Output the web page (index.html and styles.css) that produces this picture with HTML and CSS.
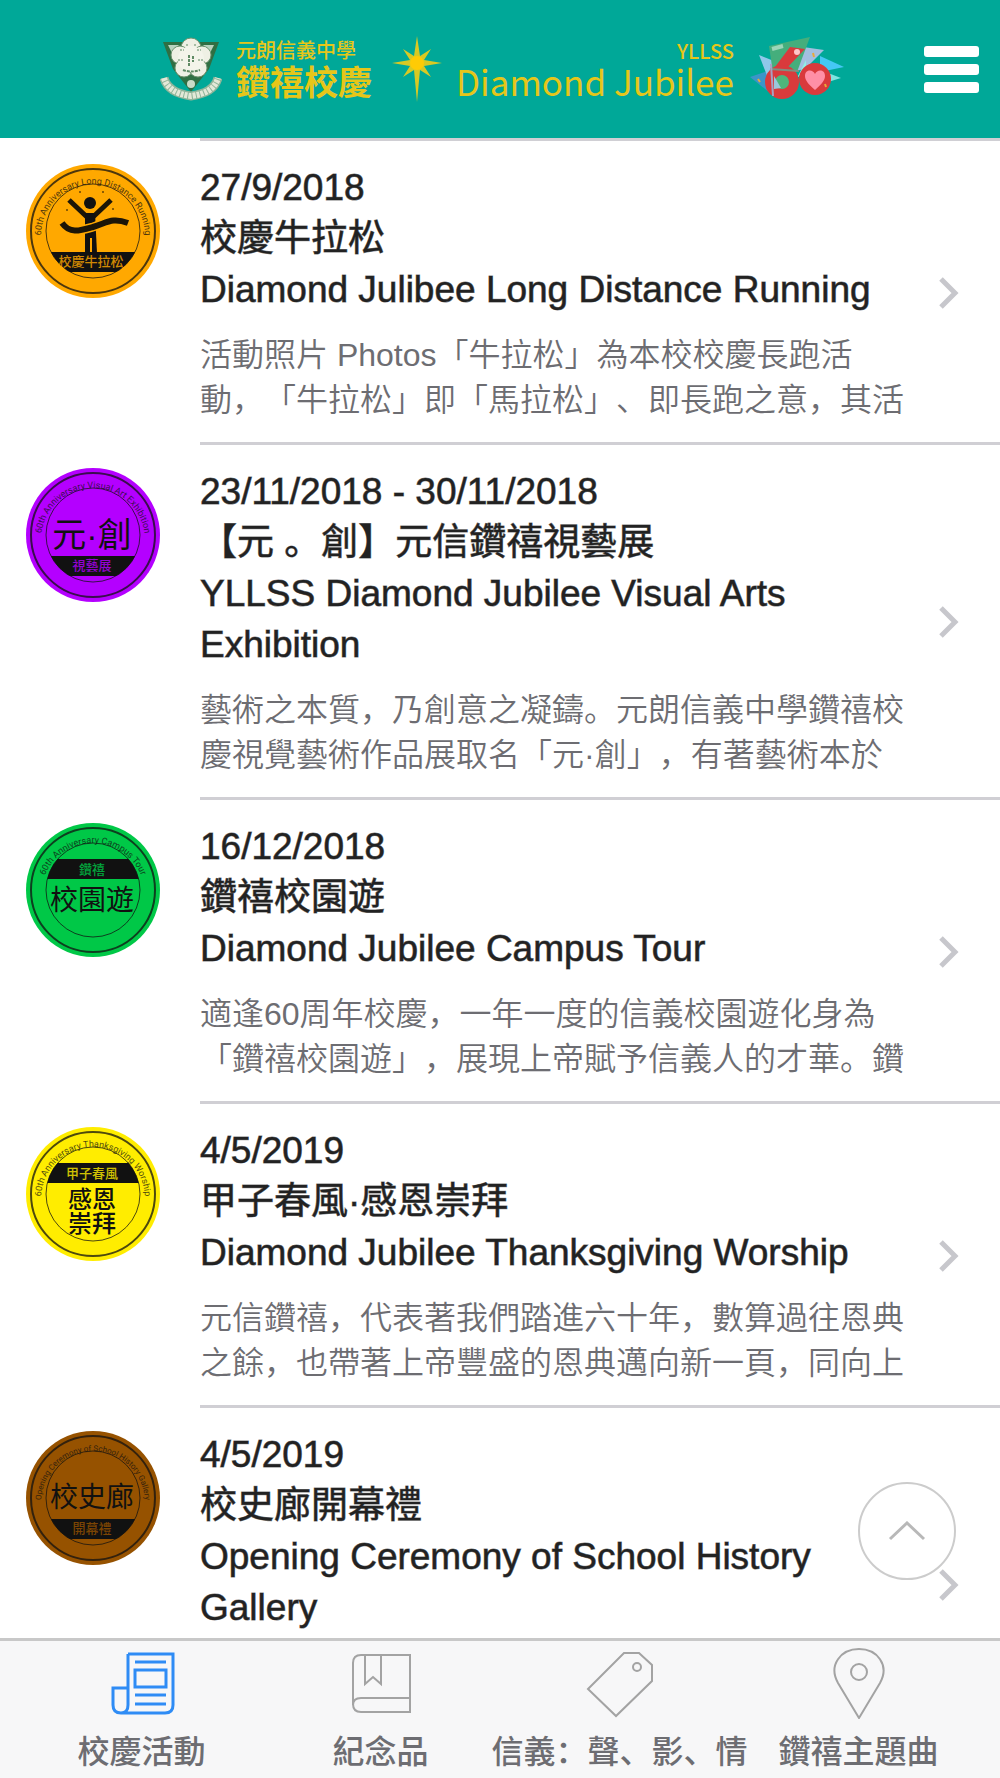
FILE: index.html
```html
<!DOCTYPE html>
<html lang="zh-CN">
<head>
    <meta charset="UTF-8">
    <meta name="viewport" content="width=device-width, initial-scale=1.0">
    <title>YLLSS Diamond Jubilee</title>
    <link rel="stylesheet" href="styles.css">
</head>
<body>
    <header class="navbar">
        <div class="brand">
            <svg class="crest" viewBox="0 0 62 66" aria-hidden="true">
                <path d="M3 6 H59 L49 33 L31 56 L13 33 Z" fill="#2f6f43"/>
                <path d="M8 9 H19 L12 17 Z M54 9 H43 L50 17 Z" fill="#b9d3bf"/>
                <g fill="#eef0e4" stroke="#6f9470">
                    <circle cx="31" cy="12" r="10"/>
                    <circle cx="20" cy="19" r="9"/>
                    <circle cx="42" cy="19" r="9"/>
                    <circle cx="24" cy="32" r="9"/>
                    <circle cx="38" cy="32" r="9"/>
                </g>
                <circle cx="31" cy="23" r="13" fill="#f3f4ea"/>
                <g fill="none" stroke="#5f8a64">
                    <path d="M29 19 V30 M33 20 V26 M23 34 Q31 37 40 34" stroke-width="2" stroke-dasharray="3 1"/>
                    <path d="M20 14 H24 M37 14 H41 M18 24 H23 M38 24 H43 M26 9 H29 M34 9 H36" stroke-dasharray="2 1"/>
                </g>
                <circle cx="31" cy="48" r="4" fill="#c9dcc8"/>
                <path d="M4 42 Q8 57 31 60 Q54 57 58 42" fill="none" stroke="#8fb59a" stroke-width="9"/>
                <path d="M4 42 Q8 57 31 60 Q54 57 58 42" fill="none" stroke="#e3e8d8" stroke-width="6" stroke-dasharray="3 1"/>
            </svg>
            <div class="brand-zh">
                <span class="brand-small">元朗信義中學</span>
                <span class="brand-large">鑽禧校慶</span>
            </div>
            <svg class="star" viewBox="0 0 50 66" aria-hidden="true">
                <path d="M25 0 L28 20 L39 13 L32 24 L50 27 L32 30 L39 41 L28 34 L25 66 L22 34 L11 41 L18 30 L0 27 L18 24 L11 13 L22 20 Z" fill="#d8c923"/>
                <circle cx="25" cy="27" r="7" fill="#ffcb05"/>
            </svg>
            <div class="brand-en">
                <span class="brand-small">YLLSS</span>
                <span class="brand-title">Diamond Jubilee</span>
            </div>
            <svg class="sixty" viewBox="0 0 94 66" aria-hidden="true">
                <path d="M0 41 L18 35 L20 57 Z" fill="#3b95c8"/>
                <path d="M9 19 L24 25 L18 42 Z" fill="#8fc8ea"/>
                <path d="M70 20 L94 31 L70 36 Z" fill="#45c8f5"/>
                <path d="M78 37 L91 42 L78 46 Z" fill="#7fe5e0"/>
                <path d="M53 11 L74 14 L56 32 L44 36 Z" fill="#a3bfe0"/>
                <path d="M56 24 L47 42 L56 34 Z" fill="#8ff0e6"/>
                <path d="M19 10 L60 1 L47 36 L23 37 Z" fill="#45ae7c"/>
                <path d="M22 13 L33 10" stroke="#9bd6b9" stroke-width="4"/>
                <path d="M40 11 L55 13 L34 35 L22 35 Z" fill="#d93a3c"/>
                <circle cx="32" cy="46" r="12" fill="#4fb57b" stroke="#d93a3c" stroke-width="10"/>
                <path d="M24 40 L31 52 L24 53 Z" fill="#9bc6dd"/>
                <path d="M20 33 L49 35" stroke="#7f8f80" stroke-width="2"/>
                <path d="M21 28 L23 60" stroke="#a7a0c4" stroke-width="2"/>
                <circle cx="65" cy="43" r="16" fill="#d93a3c"/>
                <path d="M65 54 C58 48 55 44 55 40 C55 33 63 33 65 38 C67 33 75 33 75 40 C75 44 72 48 65 54 Z" fill="#ff8fa6"/>
                <circle cx="47" cy="16" r="3" fill="#ffc6c8"/>
                <path d="M63 17 L64 21 M8 43 L10 46 M75 48 L76 51" stroke="#e8a93a" stroke-width="2"/>
            </svg>
        </div>
        <button class="menu-button" type="button" aria-label="選單">
            <span class="menu-bar"></span>
            <span class="menu-bar"></span>
            <span class="menu-bar"></span>
        </button>
    </header>

    <main class="page">
        <ul class="event-list">
            <li>
                <a class="event" href="#running">
                    <svg class="badge badge-orange" viewBox="0 0 134 134" aria-hidden="true">
                        <defs>
                            <path id="arc" d="M15 72 A52 52 0 1 1 119 72"/>
                            <clipPath id="inner"><circle cx="67" cy="67" r="47"/></clipPath>
                        </defs>
                        <circle class="badge-disc" cx="67" cy="67" r="67"/>
                        <circle class="badge-ring" cx="67" cy="67" r="62"/>
                        <circle class="badge-inner" cx="67" cy="67" r="47"/>
                        <text class="badge-arc"><textPath href="#arc" startOffset="50%">60th Anniversary Long Distance Running</textPath></text>
                        <circle cx="64" cy="39" r="6"/>
                        <path d="M43 36 L61 53 M85 36 L67 53" stroke="#1c1507" stroke-width="5"/>
                        <path d="M59 49 H69 L71 89 H59 Z"/>
                        <path class="badge-gap" d="M36 59 C44 70 53 67 67 63 S86 53 102 59"/>
                        <path d="M36 59 C44 70 53 67 67 63 S86 53 102 59" fill="none" stroke="#1c1507" stroke-width="6"/>
                        <path class="badge-slot" d="M65 74 V89"/>
                        <path d="M41 45 V47 M87 44 V46 M53 28 H55 M76 28 H78" stroke="#1c1507"/>
                        <rect x="15" y="88" width="104" height="20" clip-path="url(#inner)"/>
                        <text class="badge-band" x="65" y="102">校慶牛拉松</text>
                    </svg>
                    <div class="event-body">
                        <div class="event-text">
                            <h2 class="event-title">27/9/2018<br>校慶牛拉松<br>Diamond Julibee Long Distance Running</h2>
                            <p class="event-desc">活動照片 Photos「牛拉松」為本校校慶長跑活動，「牛拉松」即「馬拉松」、即長跑之意，其活</p>
                        </div>
                        <svg class="chevron" viewBox="0 0 22 34" aria-hidden="true"><path d="M3 3 L17 17 L3 31"/></svg>
                    </div>
                </a>
            </li>
            <li>
                <a class="event" href="#visual-arts">
                    <svg class="badge badge-purple" viewBox="0 0 134 134" aria-hidden="true">
                        <circle class="badge-disc" cx="67" cy="67" r="67"/>
                        <circle class="badge-ring" cx="67" cy="67" r="62"/>
                        <circle class="badge-inner" cx="67" cy="67" r="47"/>
                        <text class="badge-arc"><textPath href="#arc" startOffset="50%">60th Anniversary Visual Art Exhibition</textPath></text>
                        <text class="badge-big" x="66" y="79">元·創</text>
                        <rect x="15" y="88" width="104" height="20" clip-path="url(#inner)"/>
                        <text class="badge-band" x="66" y="102">視藝展</text>
                    </svg>
                    <div class="event-body">
                        <div class="event-text">
                            <h2 class="event-title">23/11/2018 - 30/11/2018<br>【元 。創】元信鑽禧視藝展<br>YLLSS Diamond Jubilee Visual Arts Exhibition</h2>
                            <p class="event-desc">藝術之本質，乃創意之凝鑄。元朗信義中學鑽禧校慶視覺藝術作品展取名「元·創」，有著藝術本於</p>
                        </div>
                        <svg class="chevron" viewBox="0 0 22 34" aria-hidden="true"><path d="M3 3 L17 17 L3 31"/></svg>
                    </div>
                </a>
            </li>
            <li>
                <a class="event" href="#campus-tour">
                    <svg class="badge badge-green" viewBox="0 0 134 134" aria-hidden="true">
                        <circle class="badge-disc" cx="67" cy="67" r="67"/>
                        <circle class="badge-ring" cx="67" cy="67" r="62"/>
                        <circle class="badge-inner" cx="67" cy="67" r="47"/>
                        <text class="badge-arc"><textPath href="#arc" startOffset="50%">60th Anniversary Campus Tour</textPath></text>
                        <rect x="15" y="36" width="104" height="20" clip-path="url(#inner)"/>
                        <text class="badge-band" x="66" y="51">鑽禧</text>
                        <text class="badge-main" x="66" y="87">校園遊</text>
                    </svg>
                    <div class="event-body">
                        <div class="event-text">
                            <h2 class="event-title">16/12/2018<br>鑽禧校園遊<br>Diamond Jubilee Campus Tour</h2>
                            <p class="event-desc">適逢60周年校慶，一年一度的信義校園遊化身為「鑽禧校園遊」，展現上帝賦予信義人的才華。鑽</p>
                        </div>
                        <svg class="chevron" viewBox="0 0 22 34" aria-hidden="true"><path d="M3 3 L17 17 L3 31"/></svg>
                    </div>
                </a>
            </li>
            <li>
                <a class="event" href="#thanksgiving">
                    <svg class="badge badge-yellow" viewBox="0 0 134 134" aria-hidden="true">
                        <circle class="badge-disc" cx="67" cy="67" r="67"/>
                        <circle class="badge-ring" cx="67" cy="67" r="62"/>
                        <circle class="badge-inner" cx="67" cy="67" r="47"/>
                        <text class="badge-arc"><textPath href="#arc" startOffset="50%">60th Anniversary Thanksgiving Worship</textPath></text>
                        <rect x="15" y="36" width="104" height="20" clip-path="url(#inner)"/>
                        <text class="badge-band" x="66" y="51">甲子春風</text>
                        <text class="badge-mid" x="66" y="81">感恩</text>
                        <text class="badge-mid" x="66" y="105">崇拜</text>
                    </svg>
                    <div class="event-body">
                        <div class="event-text">
                            <h2 class="event-title">4/5/2019<br>甲子春風·感恩崇拜<br>Diamond Jubilee Thanksgiving Worship</h2>
                            <p class="event-desc">元信鑽禧，代表著我們踏進六十年，數算過往恩典之餘，也帶著上帝豐盛的恩典邁向新一頁，同向上</p>
                        </div>
                        <svg class="chevron" viewBox="0 0 22 34" aria-hidden="true"><path d="M3 3 L17 17 L3 31"/></svg>
                    </div>
                </a>
            </li>
            <li>
                <a class="event" href="#history-gallery">
                    <svg class="badge badge-brown" viewBox="0 0 134 134" aria-hidden="true">
                        <circle class="badge-disc" cx="67" cy="67" r="67"/>
                        <circle class="badge-ring" cx="67" cy="67" r="62"/>
                        <circle class="badge-inner" cx="67" cy="67" r="47"/>
                        <text class="badge-arc badge-arc-long"><textPath href="#arc" startOffset="50%">Opening Ceremony of School History Gallery</textPath></text>
                        <text class="badge-main" x="66" y="76">校史廊</text>
                        <rect x="15" y="88" width="104" height="20" clip-path="url(#inner)"/>
                        <text class="badge-band" x="66" y="102">開幕禮</text>
                    </svg>
                    <div class="event-body">
                        <div class="event-text">
                            <h2 class="event-title">4/5/2019<br>校史廊開幕禮<br>Opening Ceremony of School History Gallery</h2>
                            <p class="event-desc"></p>
                        </div>
                        <svg class="chevron" viewBox="0 0 22 34" aria-hidden="true"><path d="M3 3 L17 17 L3 31"/></svg>
                    </div>
                </a>
            </li>
        </ul>
    </main>

    <button class="to-top" type="button" aria-label="返回頂部">
        <svg viewBox="0 0 38 20" aria-hidden="true"><path d="M2 18 L19 2 L36 18"/></svg>
    </button>

    <nav class="tabbar">
        <a class="tab tab-active" href="#events">
            <svg class="tab-icon" viewBox="0 0 72 72" aria-hidden="true">
                <path d="M22 7 H67 V58 Q67 66 59 66 H15 Q7 66 7 58 V41 H22 M22 7 V58 Q22 66 15 66 M29 15 H60 M29 23 H60 V40 H29 Z M29 48 H60 M29 57 H60"/>
            </svg>
            <span>校慶活動</span>
        </a>
        <a class="tab" href="#souvenirs">
            <svg class="tab-icon" viewBox="0 0 72 72" aria-hidden="true">
                <path d="M65 8 V65 H16 Q8 65 8 57 V16 Q8 8 16 8 Z M65 51 H16 Q8 51 8 58 M20 8 V37 L28 30 L36 37 V8"/>
            </svg>
            <span>紀念品</span>
        </a>
        <a class="tab" href="#media">
            <svg class="tab-icon" viewBox="0 0 72 72" aria-hidden="true">
                <path d="M4 42 L40 6 H55 L68 18 V34 L32 69 Z"/>
                <circle cx="53" cy="20" r="4"/>
            </svg>
            <span>信義：聲、影、情</span>
        </a>
        <a class="tab" href="#theme-song">
            <svg class="tab-icon" viewBox="0 0 72 72" aria-hidden="true">
                <path d="M36 71 L15 36 C5 18 18 2 36 2 S67 18 57 36 Z"/>
                <circle cx="36" cy="25" r="8"/>
            </svg>
            <span>鑽禧主題曲</span>
        </a>
    </nav>
</body>
</html>
```
FILE: styles.css
```css
* {
    box-sizing: border-box;
}
body {
    display: flex;
    flex-direction: column;
    height: 100vh;
    margin: 0;
    background-color: #fff;
    color: #222;
    font-family: "Liberation Sans", "Noto Sans CJK SC", sans-serif;
    text-spacing-trim: space-all;
}
a {
    color: inherit;
    text-decoration: none;
}
button {
    padding: 0;
    border: 0;
    background: none;
    cursor: pointer;
}

/* header */
.navbar {
    display: flex;
    align-items: center;
    flex-shrink: 0;
    height: 138px;
    padding: 0 21px 0 160px;
    background-color: #00a898;
}
.brand {
    display: flex;
    align-items: center;
    flex: 1;
    color: #e6c619;
    font-family: "Noto Sans CJK TC", sans-serif;
    white-space: nowrap;
}
.crest {
    width: 62px;
    height: 66px;
    margin-right: 14px;
}
.brand-zh, .brand-en {
    display: flex;
    flex-direction: column;
}
.brand-en {
    align-items: flex-end;
}
.brand-small {
    font-size: 20px;
    font-weight: 500;
    line-height: 24px;
}
.brand-large {
    font-size: 34px;
    font-weight: 700;
    line-height: 38px;
}
.brand-title {
    font-size: 35px;
    font-weight: 400;
    line-height: 36px;
}
.star {
    width: 50px;
    height: 66px;
    margin: 0 14px 0 20px;
}
.sixty {
    width: 94px;
    height: 66px;
    margin-left: 16px;
}
.menu-button {
    display: flex;
    flex-direction: column;
    gap: 7px;
    width: 55px;
}
.menu-bar {
    height: 11px;
    border-radius: 3px;
    background-color: #fff;
}

/* event list */
.page {
    flex: 1;
    min-height: 0;
    overflow-y: auto;
    scrollbar-width: none;
}
.event-list {
    margin: 0;
    padding: 0;
    list-style: none;
}
.event {
    display: flex;
    align-items: flex-start;
    gap: 40px;
    padding-left: 26px;
}
.event-body {
    display: flex;
    align-items: center;
    flex: 1;
    padding: 21px 40px 19px 0;
    border-top: 3px solid #d0cfd4;
}
.event-text {
    flex: 1;
    padding-right: 28px;
}
.event-title {
    margin: 0 0 18px;
    font-size: 37px;
    font-weight: 400;
    line-height: 51px;
    -webkit-text-stroke: 1px rgba(34, 34, 34, 0.6);
}
.event-desc {
    height: 90px;
    margin: 0;
    overflow: hidden;
    color: #6d6d72;
    font-size: 32px;
    font-weight: 350;
    line-height: 45px;
}
.chevron {
    width: 22px;
    height: 34px;
    fill: none;
    stroke: #c7c7cc;
    stroke-width: 5;
}

/* round badges */
.badge {
    flex-shrink: 0;
    width: 134px;
    height: 134px;
    margin-top: 26px;
    fill: #111;
    font-family: "Noto Sans CJK TC", sans-serif;
    text-anchor: middle;
}
.badge-disc, .badge-band {
    fill: var(--badge);
}
.badge-ring, .badge-inner {
    fill: none;
    stroke: #111;
    stroke-opacity: 0.75;
}
.badge-ring {
    stroke-width: 2;
}
.badge-arc {
    font-family: Roboto, sans-serif;
    font-size: 9px;
    opacity: 0.75;
}
.badge-arc-long {
    font-size: 8px;
}
.badge-gap, .badge-slot {
    fill: none;
    stroke: var(--badge);
    stroke-width: 9;
}
.badge-slot {
    stroke-width: 2;
}
.badge-band {
    font-size: 13px;
    font-weight: 500;
    opacity: 0.8;
}
.badge-main {
    font-size: 28px;
    font-weight: 400;
}
.badge-big {
    font-family: "Liberation Sans", "Noto Sans CJK TC", sans-serif;
    font-size: 34px;
    font-weight: 400;
}
.badge-mid {
    font-size: 24px;
    font-weight: 500;
}
.badge-orange {
    --badge: #ffa800;
}
.badge-purple {
    --badge: #b400ff;
}
.badge-green {
    --badge: #00c847;
}
.badge-yellow {
    --badge: #ffed00;
}
.badge-brown {
    --badge: #965200;
}

/* back to top */
.to-top {
    position: fixed;
    right: 44px;
    bottom: 198px;
    display: flex;
    align-items: center;
    justify-content: center;
    width: 98px;
    height: 98px;
    border: 2px solid #ccc;
    border-radius: 50%;
    background-color: #fff;
}
.to-top svg {
    width: 38px;
    height: 20px;
    fill: none;
    stroke: #b8b8b8;
    stroke-width: 3;
}

/* bottom tabs */
.tabbar {
    display: grid;
    grid-template-columns: repeat(4, minmax(0, 1fr));
    flex-shrink: 0;
    padding: 6px 22px 2px;
    border-top: 3px solid #c8c8c8;
    background-color: #f7f7f8;
}
.tab {
    display: flex;
    flex-direction: column;
    align-items: center;
    gap: 9px;
    color: #6d6d72;
    font-size: 32px;
    font-weight: 500;
    line-height: 48px;
    white-space: nowrap;
}
.tab-icon {
    width: 72px;
    height: 72px;
    fill: none;
    stroke: #a3a3a3;
    stroke-width: 2;
}
.tab-active .tab-icon {
    stroke: #2f8cf5;
    stroke-width: 3;
}
```
